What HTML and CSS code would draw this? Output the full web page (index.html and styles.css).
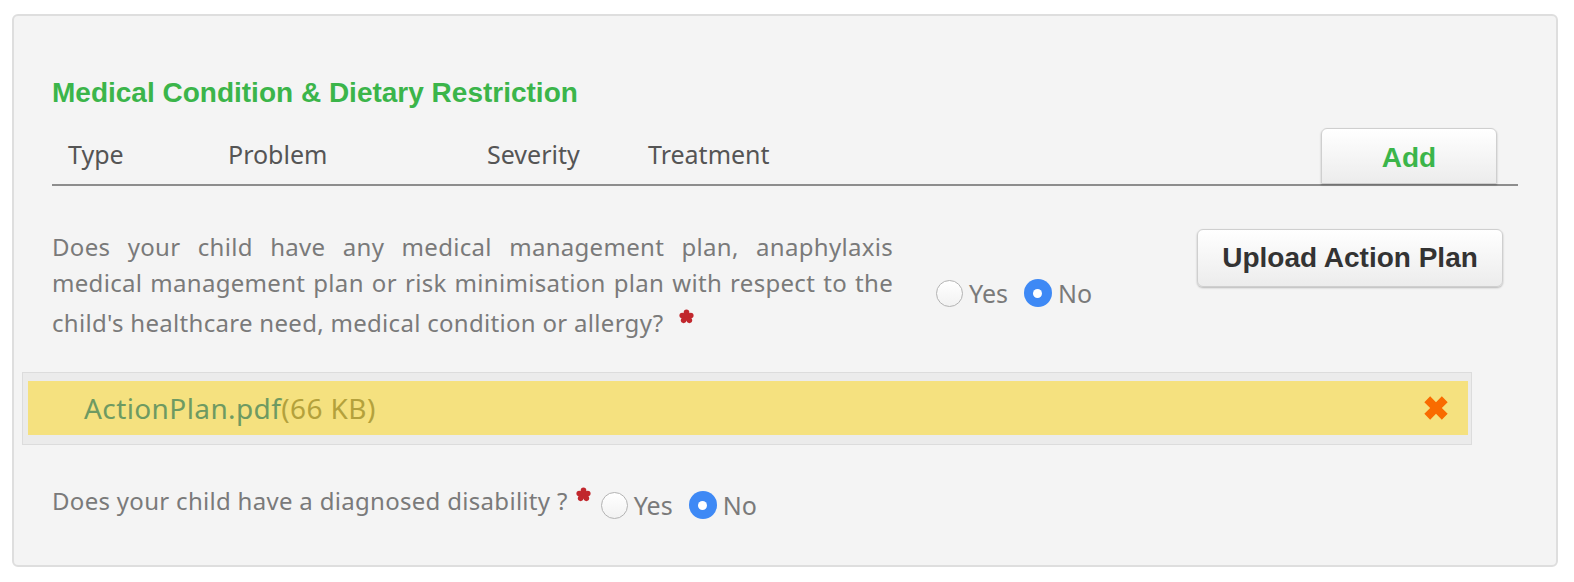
FILE: index.html
```
<!DOCTYPE html>
<html lang="en">
<head>
    <meta charset="UTF-8"/>
    <title>Medical Condition &amp; Dietary Restriction</title>
    <link rel="stylesheet" href="styles.css">
</head>
<body>

<div class="panel">
    <h2 class="section-title">Medical Condition &amp; Dietary Restriction</h2>

    <!-- medical table header -->
    <div class="med-head">
        <span class="col col-type">Type</span>
        <span class="col col-problem">Problem</span>
        <span class="col col-severity">Severity</span>
        <span class="col col-treatment">Treatment</span>
        <button class="btn btn-add">Add</button>
    </div>

    <div class="question q-plan">
        <p class="q-text">Does your child have any medical management plan, anaphylaxis medical management plan or risk minimisation plan with respect to the child's healthcare need, medical condition or allergy?<svg class="req" viewBox="0 0 14 14" aria-hidden="true"><circle cx="7" cy="7" r="4"/><circle cx="7" cy="3" r="2.6"/><circle cx="3" cy="6" r="2.6"/><circle cx="11" cy="6" r="2.6"/><circle cx="4.3" cy="10.6" r="2.6"/><circle cx="9.7" cy="10.6" r="2.6"/></svg></p>
        <div class="radios">
            <label class="radio"><span class="dot"></span>Yes</label>
            <label class="radio"><span class="dot checked"></span>No</label>
        </div>
        <button class="btn btn-upload">Upload Action Plan</button>
    </div>

    <div class="file-box">
        <div class="file-row">
            <span class="file-name">ActionPlan.pdf</span><span class="file-size">(66 KB)</span>
            <svg class="file-remove" viewBox="0 0 24 24" aria-hidden="true">
                <path d="M2 7 7 2 12 7 17 2 22 7 17 12 22 17 17 22 12 17 7 22 2 17 7 12z"/>
            </svg>
        </div>
    </div>

    <div class="question q-disability">
        <p class="q-text">Does your child have a diagnosed disability ?<svg class="req" viewBox="0 0 14 14" aria-hidden="true"><circle cx="7" cy="7" r="4"/><circle cx="7" cy="3" r="2.6"/><circle cx="3" cy="6" r="2.6"/><circle cx="11" cy="6" r="2.6"/><circle cx="4.3" cy="10.6" r="2.6"/><circle cx="9.7" cy="10.6" r="2.6"/></svg></p>
        <div class="radios">
            <label class="radio"><span class="dot"></span>Yes</label>
            <label class="radio"><span class="dot checked"></span>No</label>
        </div>
    </div>
</div>

</body>
</html>
```

FILE: styles.css
```
body {
  margin: 0;
  background: #fff;
  font-family: "Noto Sans", "DejaVu Sans", sans-serif;
  color: #7a7a7a;
}
.panel {
  margin: 14px 0 0 12px;
  width: 1546px;
  height: 553px;
  background: #f4f4f4;
  border: 2px solid #dedede;
  border-radius: 6px;
  padding: 0 38px;
  box-sizing: border-box;
}
.section-title {
  margin: 0;
  padding-top: 61px;
  font-family: "Liberation Sans", Arial, sans-serif;
  font-size: 28px;
  line-height: 32px;
  font-weight: bold;
  color: #3bb54a;
}

/* table header with add button */
.med-head {
  display: flex;
  align-items: flex-end;
  width: 1466px;
  margin-top: 19px;
  border-bottom: 2px solid #8d8d8d;
}
.col {
  font-size: 25px;
  line-height: 34px;
  color: #555;
  padding-bottom: 13px;
}
.col-type { padding-left: 16px; width: 160px; }
.col-problem { width: 259px; }
.col-severity { width: 161px; }
.col-treatment { flex: 1; }

.btn {
  font-family: "Liberation Sans", Arial, sans-serif;
  font-weight: bold;
  font-size: 28px;
  border: 1px solid #cfcfcf;
  border-radius: 6px;
  background: linear-gradient(#fff, #ececec);
  box-shadow: 0 1px 2px rgba(0, 0, 0, 0.25);
  cursor: pointer;
}
.btn-add {
  width: 176px;
  height: 56px;
  margin-right: 21px;
  color: #3bb54a;
  border-bottom-left-radius: 0;
  border-bottom-right-radius: 0;
  padding-top: 4px;
}
.btn-upload {
  width: 306px;
  height: 58px;
  margin-left: auto;
  margin-right: 15px;
  color: #333;
}

/* questions */
.question {
  display: flex;
  align-items: center;
}
.q-text {
  margin: 0;
  font-size: 24px;
  line-height: 36px;
  letter-spacing: 0.3px;
}
.q-plan {
  margin-top: 43px;
  align-items: flex-start;
}
.q-plan .q-text {
  width: 841px;
  text-align: justify;
}
.q-plan .radios {
  margin: 47px 0 0 43px;
}
.req {
  width: 15px;
  height: 15px;
  fill: #c1272d;
  vertical-align: 8px;
  margin-left: 8px;
}
.q-plan .req {
  margin-top: 8px;
  margin-left: 16px;
}
.radios {
  display: flex;
  align-items: center;
}
.radio {
  display: flex;
  align-items: center;
  font-size: 25px;
  margin-right: 16px;
}
.dot {
  width: 25px;
  height: 25px;
  border-radius: 50%;
  border: 1px solid #b3b3b3;
  background: linear-gradient(#fff, #f2f2f2);
  margin-right: 6px;
}
.dot.checked {
  width: 28px;
  height: 28px;
  border: none;
  background: #3e89f5;
  display: flex;
  align-items: center;
  justify-content: center;
}
.dot.checked::after {
  content: "";
  width: 9px;
  height: 9px;
  border-radius: 50%;
  background: #fff;
}

/* uploaded file */
.file-box {
  margin: 31px 0 0 -30px;
  width: 1450px;
  padding: 8px 3px 9px 5px;
  background: #ebebeb;
  border: 1px solid #dcdcdc;
  box-sizing: border-box;
}
.file-row {
  display: flex;
  align-items: center;
  height: 54px;
  padding: 0 18px 0 56px;
  background: #f5e17f;
  font-size: 28px;
  letter-spacing: 0.4px;
}
.file-name { color: #6e9a62; }
.file-size { color: #b4a13c; }
.file-remove {
  width: 28px;
  height: 28px;
  margin-left: auto;
  fill: #f96b00;
}

.q-disability {
  margin-top: 34px;
}
.q-disability .radios {
  margin: 9px 0 0 10px;
}
```
